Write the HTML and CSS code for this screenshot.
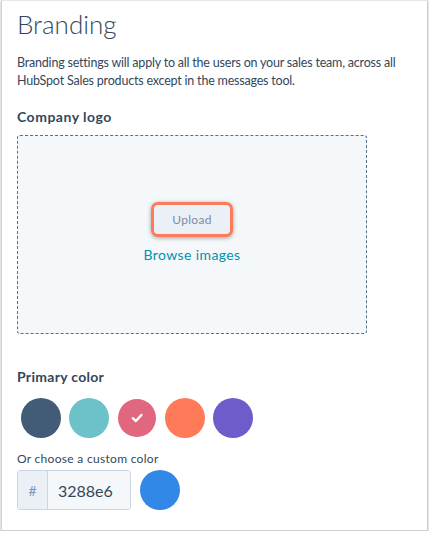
FILE: index.html
```html
<!DOCTYPE html>
<html lang="en">
<head>
    <meta charset="UTF-8">
    <meta name="viewport" content="width=device-width, initial-scale=1.0">
    <title>Branding</title>
    <link rel="stylesheet" href="styles.css">
</head>
<body>

<div id="panel">
    <h1>Branding</h1>
    <p class="intro">Branding settings will apply to all the users on your sales team, across all HubSpot Sales products except in the messages tool.</p>

    <h2>Company logo</h2>
    <div class="dropzone">
        <button type="button" class="upload">Upload</button>
        <a href="#" class="browse">Browse images</a>
    </div>

    <h2 class="color-title">Primary color</h2>
    <div class="swatches">
        <span class="swatch slate"></span>
        <span class="swatch teal"></span>
        <span class="swatch pink selected">
            <svg width="14" height="14" viewBox="0 0 14 14"><path d="M2.8 7.2 L5.9 10 L11.4 4" fill="none" stroke="#fff" stroke-width="2.4" stroke-linecap="round" stroke-linejoin="round"/></svg>
        </span>
        <span class="swatch orange"></span>
        <span class="swatch purple"></span>
    </div>

    <label for="custom" class="custom-label">Or choose a custom color</label>
    <div class="custom-row">
        <div class="hex-input">
            <span class="prefix">#</span>
            <input type="text" id="custom" value="3288e6">
        </div>
        <span class="swatch blue"></span>
    </div>
</div>

</body>
</html>
```

FILE: styles.css
```css
body {
    font-family: 'Lato', 'Open Sans', sans-serif;
    background-color: #fff;
    color: #33475b;
    margin: 0;
}

#panel {
    width: 427px;
    height: 531px;
    margin-left: 1px;
    border: 1px solid #d0d0d0;
    border-top-color: #e6e6e6;
    box-shadow: 0 1px 2px rgba(0, 0, 0, 0.35);
    box-sizing: border-box;
    padding: 0 15px;
}

h1 {
    font-size: 26px;
    font-weight: 300;
    margin: 5px 0 0;
    line-height: 36px;
}

.intro {
    font-size: 12.5px;
    letter-spacing: -0.2px;
    line-height: 18px;
    margin: 12px 0 0;
}

h2 {
    font-size: 14px;
    font-weight: 700;
    letter-spacing: 0.5px;
    margin: 17px 0 0;
    line-height: 20px;
}

.dropzone {
    width: 350px;
    height: 199px;
    margin-top: 8px;
    box-sizing: border-box;
    background-color: #f5f8fa;
    border: 1px dashed #51718f;
    border-radius: 3px;
    display: flex;
    flex-direction: column;
    align-items: center;
    justify-content: center;
    padding-bottom: 5px;
}

.upload {
    font-family: inherit;
    font-size: 12px;
    letter-spacing: 0.3px;
    color: #7c8aa6;
    background-color: #eaf0f6;
    border: 3px solid #ff7a59;
    border-radius: 7px;
    box-shadow: 0 1px 4px rgba(0, 0, 0, 0.35);
    padding: 8px 18px;
    line-height: 13px;
}

.browse {
    color: #0091ae;
    font-size: 14px;
    letter-spacing: 0.4px;
    text-decoration: none;
    margin-top: 9px;
}

.color-title {
    margin-top: 33px;
    letter-spacing: 0.3px;
}

.swatches {
    display: flex;
    gap: 8px;
    margin-top: 11px;
    padding-left: 4px;
}

.swatch {
    width: 40px;
    height: 40px;
    border-radius: 50%;
    display: flex;
    align-items: center;
    justify-content: center;
    flex-shrink: 0;
}

.slate { background-color: #425b76; }
.teal { background-color: #6dc1c8; }
.pink { background-color: #e0677d; }
.orange { background-color: #ff7a59; }
.purple { background-color: #6f5ccb; }
.blue { background-color: #3288e6; }

.selected {
    width: 38px;
    height: 38px;
    margin: 1px;
}

.custom-label {
    display: block;
    font-size: 12px;
    letter-spacing: 0.3px;
    margin-top: 13px;
    line-height: 16px;
}

.custom-row {
    display: flex;
    align-items: center;
    gap: 9px;
    margin-top: 3px;
}

.hex-input {
    display: flex;
    width: 114px;
    height: 40px;
    box-sizing: border-box;
    border: 1px solid #cbd6e2;
    border-radius: 3px;
    overflow: hidden;
}

.prefix {
    width: 29px;
    background-color: #eaf0f6;
    border-right: 1px solid #cbd6e2;
    color: #7c98b6;
    font-size: 14px;
    display: flex;
    align-items: center;
    justify-content: center;
}

input {
    width: 0;
    flex: 1;
    border: none;
    background-color: #f5f8fa;
    font-family: inherit;
    font-size: 16px;
    color: #33475b;
    padding: 0 0 0 10px;
}
```
